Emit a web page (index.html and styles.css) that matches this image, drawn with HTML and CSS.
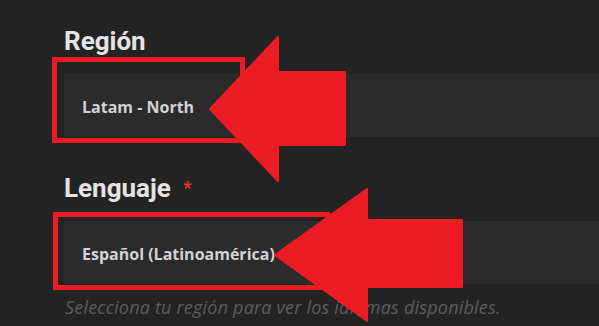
FILE: index.html
```html
<!DOCTYPE html>
<html lang="es">
  <head>
    <meta charset="UTF-8" />
    <title>Región y lenguaje</title>
    <link rel="stylesheet" href="styles.css">
  </head>
  <body>
    <form class="settings">
      <div class="field-group">
        <label class="field-label">Región</label>
        <div class="field-value">Latam - North</div>
      </div>

      <div class="field-group">
        <label class="field-label">Lenguaje <span class="required">*</span></label>
        <div class="field-value">Español (Latinoamérica)</div>
        <p class="field-hint">Selecciona tu región para ver los idiomas disponibles.</p>
      </div>
    </form>

    <!-- annotation overlay -->
    <svg class="marks" width="599" height="326" viewBox="0 0 599 326">
      <rect x="54.5" y="59.5" width="188" height="81" fill="none" stroke="#ea1c24" stroke-width="5" />
      <rect x="55.5" y="214.5" width="272" height="73" fill="none" stroke="#ea1c24" stroke-width="5" />
      <polygon points="210,109 278,37 278,72 345,72 345,145 278,145 278,181"
        fill="#ed1c24" stroke="#ed1c24" stroke-width="2" stroke-linejoin="round" />
      <polygon points="275,255 367,189 367,220 462,220 462,287 367,287 367,321"
        fill="#ed1c24" stroke="#ed1c24" stroke-width="2" stroke-linejoin="round" />
    </svg>
  </body>
</html>
```

FILE: styles.css
```css
body {
  margin: 0;
  background: #232323;
  font-family: "Open Sans", Arial, sans-serif;
  width: 599px;
  height: 326px;
  overflow: hidden;
  position: relative;
}
.settings {
  padding: 26px 0 0 64px;
}
.field-group + .field-group {
  margin-top: 36px;
}
.field-label {
  display: block;
  font-family: Roboto, Arial, sans-serif;
  font-weight: 700;
  font-size: 26px;
  line-height: 30px;
  color: #e4e4e4;
  margin-bottom: 18px;
}
.required {
  color: #e5322d;
  font-size: 18px;
  margin-left: 6px;
  vertical-align: top;
}
.field-value {
  display: flex;
  align-items: center;
  height: 63px;
  padding: 3px 0 0 18px;
  box-sizing: border-box;
  background: #2b2b2b;
  color: #d2d2d2;
  font-weight: 700;
  font-size: 16px;
}
.field-hint {
  margin: 12px 0 0 1px;
  font-style: italic;
  font-size: 18px;
  line-height: 22px;
  letter-spacing: 0.2px;
  color: #5e5e5e;
}
.marks {
  position: absolute;
  left: 0;
  top: 0;
}
```
